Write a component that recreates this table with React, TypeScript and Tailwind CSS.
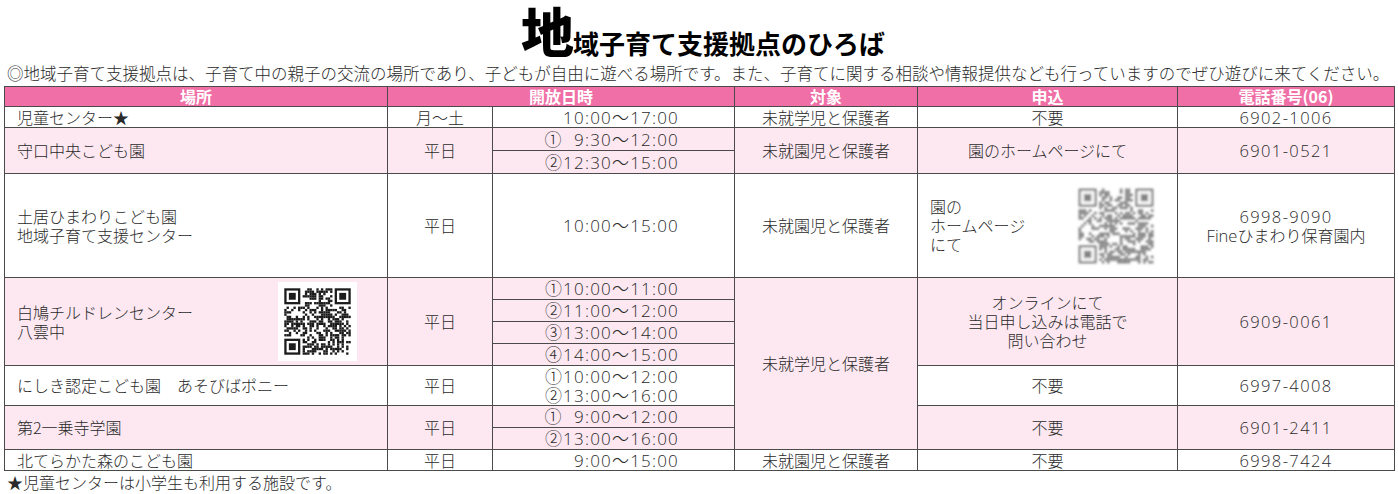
import React from "react";

const FONT = { fontFamily: '"Noto Sans CJK JP", "Noto Sans", sans-serif' };
const NUM = { fontFamily: '"Open Sans", "Noto Sans CJK JP", sans-serif' };

function makeQR(seed: number, n = 25) {
  let s = seed;
  const rnd = () => {
    s = (s * 1103515245 + 12345) & 0x7fffffff;
    return s / 0x7fffffff;
  };
  const cells: [number, number][] = [];
  const inFinder = (x: number, y: number) =>
    (x < 8 && y < 8) || (x >= n - 8 && y < 8) || (x < 8 && y >= n - 8);
  for (let y = 0; y < n; y++) {
    for (let x = 0; x < n; x++) {
      if (inFinder(x, y)) continue;
      if (rnd() < 0.5) cells.push([x, y]);
    }
  }
  return cells;
}

function QR({ seed, size, color, blur, n = 25 }: { seed: number; size: number; color: string; blur?: number; n?: number }) {
  const cells = makeQR(seed, n);
  const finder = (ox: number, oy: number) => (
    <g key={`${ox}-${oy}`}>
      <rect x={ox} y={oy} width={7} height={7} fill={color} />
      <rect x={ox + 1} y={oy + 1} width={5} height={5} fill="#fff" />
      <rect x={ox + 2} y={oy + 2} width={3} height={3} fill={color} />
    </g>
  );
  const fid = `b${seed}`;
  return (
    <svg width={size} height={size} viewBox={`-1 -1 ${n + 2} ${n + 2}`}>
      {blur ? (
        <defs>
          <filter id={fid}>
            <feGaussianBlur stdDeviation={blur} />
          </filter>
        </defs>
      ) : null}
      <rect x={-1} y={-1} width={n + 2} height={n + 2} fill="#fff" />
      <g filter={blur ? `url(#${fid})` : undefined}>
        {cells.map(([x, y]) => (
          <rect key={`${x}_${y}`} x={x} y={y} width={1.02} height={1.02} fill={color} />
        ))}
        {finder(0, 0)}
        {finder(n - 7, 0)}
        {finder(0, n - 7)}
      </g>
    </svg>
  );
}

const B = "border border-[#4a4a4a]";
const PINK = "bg-[#fde8f1]";

function Time({ children }: { children: React.ReactNode }) {
  return (
    <span className="text-[17px] tracking-[1.2px]" style={NUM}>
      {children}
    </span>
  );
}

function Num({ children }: { children: React.ReactNode }) {
  return (
    <span className="text-[16.5px] tracking-[1.4px]" style={NUM}>
      {children}
    </span>
  );
}

export default function App() {
  const td = `${B} p-0 align-middle`;
  const center = `${td} text-center`;
  const name = `${td} text-left pl-[12px]`;
  const time = `${td} text-right pr-[55px]`;
  return (
    <div className="w-[1398px] h-[494px] bg-white text-[#2a2a2a] overflow-hidden" style={FONT}>
      <div className="flex justify-center items-end h-[60px] pl-[8px] text-black">
        <span className="text-[53px] font-black leading-[60px] tracking-[-1px]">地</span>
        <span className="text-[26px] font-bold leading-[30px] mb-[2px]">域子育て支援拠点のひろば</span>
      </div>
      <div className="pl-[7px] text-[16.5px] leading-[26px] whitespace-nowrap font-light">
        ◎地域子育て支援拠点は、子育て中の親子の交流の場所であり、子どもが自由に遊べる場所です。また、子育てに関する相談や情報提供なども行っていますのでぜひ遊びに来てください。
      </div>
      <div className="pl-[4px]">
        <table className="table-fixed border-collapse w-[1390px] text-[16px] leading-[19px] font-light">
          <colgroup>
            <col className="w-[383px]" />
            <col className="w-[105px]" />
            <col className="w-[242px]" />
            <col className="w-[183px]" />
            <col className="w-[260px]" />
            <col className="w-[217px]" />
          </colgroup>
          <thead>
            <tr className="h-[20px] bg-[#ef6fa6] text-white">
              <th className={`${B} p-0 font-bold`}>場所</th>
              <th className={`${B} p-0 font-bold`} colSpan={2}>開放日時</th>
              <th className={`${B} p-0 font-bold`}>対象</th>
              <th className={`${B} p-0 font-bold`}>申込</th>
              <th className={`${B} p-0 font-bold`}>電話番号(06)</th>
            </tr>
          </thead>
          <tbody>
            <tr className="h-[21px]">
              <td className={name}>児童センター★</td>
              <td className={center}>月～土</td>
              <td className={time}><Time>10:00～17:00</Time></td>
              <td className={center}>未就学児と保護者</td>
              <td className={center}>不要</td>
              <td className={center}><Num>6902-1006</Num></td>
            </tr>
            <tr className={`h-[23px] ${PINK}`}>
              <td className={name} rowSpan={2}>守口中央こども園</td>
              <td className={center} rowSpan={2}>平日</td>
              <td className={time}><Time>①&nbsp;&nbsp;9:30～12:00</Time></td>
              <td className={center} rowSpan={2}>未就園児と保護者</td>
              <td className={center} rowSpan={2}>園のホームページにて</td>
              <td className={center} rowSpan={2}><Num>6901-0521</Num></td>
            </tr>
            <tr className={`h-[23px] ${PINK}`}>
              <td className={time}><Time>②12:30～15:00</Time></td>
            </tr>
            <tr className="h-[104px]">
              <td className={name}>
                土居ひまわりこども園
                <br />
                地域子育て支援センター
              </td>
              <td className={center}>平日</td>
              <td className={time}><Time>10:00～15:00</Time></td>
              <td className={center}>未就園児と保護者</td>
              <td className={td}>
                <div className="flex items-center pl-[12px] pr-[21px]">
                  <div className="flex-1">
                    園の
                    <br />
                    ホームページ
                    <br />
                    にて
                  </div>
                  <div className="opacity-55">
                    <QR seed={7} size={80} color="#222" blur={0.4} n={29} />
                  </div>
                </div>
              </td>
              <td className={center}>
                <Num>6998-9090</Num>
                <br />
                <span className="text-[16.5px]" style={NUM}>Fine</span>ひまわり保育園内
              </td>
            </tr>
            <tr className={`h-[22px] ${PINK}`}>
              <td className={td} rowSpan={4}>
                <div className="flex items-center pl-[12px] pr-[30px]">
                  <div className="flex-1">
                    白鳩チルドレンセンター
                    <br />
                    八雲中
                  </div>
                  <div className="bg-white p-[4px]">
                    <QR seed={31} size={71} color="#1a1a1a" blur={0.3} n={29} />
                  </div>
                </div>
              </td>
              <td className={center} rowSpan={4}>平日</td>
              <td className={time}><Time>①10:00～11:00</Time></td>
              <td className={center} rowSpan={7}>未就学児と保護者</td>
              <td className={center} rowSpan={4}>
                オンラインにて
                <br />
                当日申し込みは電話で
                <br />
                問い合わせ
              </td>
              <td className={center} rowSpan={4}><Num>6909-0061</Num></td>
            </tr>
            <tr className={`h-[22px] ${PINK}`}>
              <td className={time}><Time>②11:00～12:00</Time></td>
            </tr>
            <tr className={`h-[22px] ${PINK}`}>
              <td className={time}><Time>③13:00～14:00</Time></td>
            </tr>
            <tr className={`h-[22px] ${PINK}`}>
              <td className={time}><Time>④14:00～15:00</Time></td>
            </tr>
            <tr className="h-[40px]">
              <td className={name}>にしき認定こども園　あそびばポニー</td>
              <td className={center}>平日</td>
              <td className={`${time} leading-[18px]`}>
                <Time>①10:00～12:00</Time>
                <br />
                <Time>②13:00～16:00</Time>
              </td>
              <td className={center}>不要</td>
              <td className={center}><Num>6997-4008</Num></td>
            </tr>
            <tr className={`h-[22px] ${PINK}`}>
              <td className={name} rowSpan={2}>第2一乗寺学園</td>
              <td className={center} rowSpan={2}>平日</td>
              <td className={time}><Time>①&nbsp;&nbsp;9:00～12:00</Time></td>
              <td className={center} rowSpan={2}>不要</td>
              <td className={center} rowSpan={2}><Num>6901-2411</Num></td>
            </tr>
            <tr className={`h-[22px] ${PINK}`}>
              <td className={time}><Time>②13:00～16:00</Time></td>
            </tr>
            <tr className="h-[21px]">
              <td className={name}>北てらかた森のこども園</td>
              <td className={center}>平日</td>
              <td className={time}><Time>9:00～15:00</Time></td>
              <td className={center}>未就園児と保護者</td>
              <td className={center}>不要</td>
              <td className={center}><Num>6998-7424</Num></td>
            </tr>
          </tbody>
        </table>
      </div>
      <div className="pl-[7px] text-[16px] leading-[22px] font-light">★児童センターは小学生も利用する施設です。</div>
    </div>
  );
}
